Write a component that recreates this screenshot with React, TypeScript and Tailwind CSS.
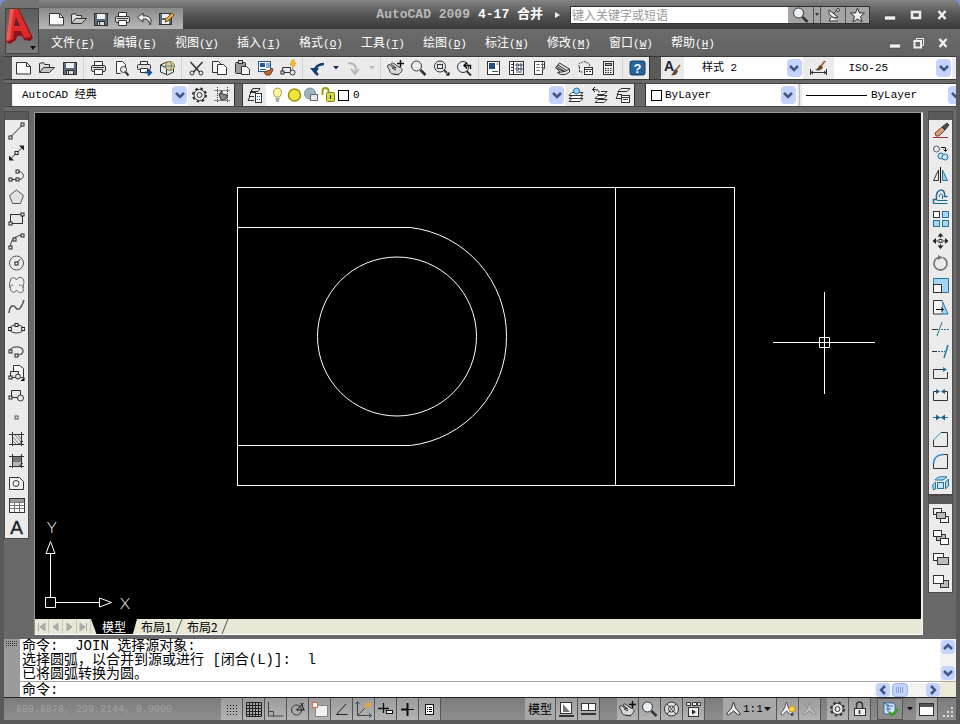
import type { ReactNode } from 'react';

const SONG = "font-['Liberation_Mono','Noto_Sans_CJK_SC',monospace]";

function Node({ x, y }: { x: number; y: number }) {
  return <rect x={x - 1.5} y={y - 1.5} width="3" height="3" fill="#f4f4f4" stroke="#222" />;
}

// All glyphs share a 17x18 box.
const glyphs: Record<string, ReactNode> = {
  new: <><path d="M1.5 3.5h10l4 4v7.5h-14z" fill="#fbfbfb" /><path d="M11.5 3.5v4h4" /></>,
  open: <><path d="M1.5 13.5v-9l4-1 1 2h5v3" fill="#ddd" /><path d="M1.5 13.5l4-5h11l-5 5z" fill="#c4c4c4" /></>,
  save: <><rect x="2.5" y="3.5" width="13" height="12" fill="#5b6b7d" /><rect x="5" y="4" width="8" height="5" fill="#f2f2f2" stroke="none" /><rect x="5.5" y="11.5" width="7" height="4" fill="#dcdcdc" /><path d="M7.5 12v3" /></>,
  print: <><path d="M4.5 6.500v-4h8v4" fill="#fff" /><rect x="1.500" y="6.500" width="14" height="6" rx="1.500" fill="#ddd" /><path d="M4.500 10.500h8v5h-8z" fill="#fff" /><path d="M3 8.500h11" /></>,
  preview: <><path d="M3.5 14.500v-12h6l3 3v4" fill="#fafafa" /><path d="M3.500 14.500h4" /><circle cx="10.500" cy="10.500" r="3" fill="#e5eef5" /><path d="M12.500 13l3 3.500" strokeWidth="2" /></>,
  plot: <><path d="M4.500 5.500v-3h7v3" fill="#fff" /><rect x="1.500" y="5.500" width="13" height="5" rx="1" fill="#ddd" /><path d="M4.500 9.500h7v4h-7z" fill="#fff" /><path d="M9 13.500h5M12 10.500l3 3-3 3" stroke="#14508f" strokeWidth="2" /></>,
  sphere: <><path d="M1.500 6l6-3 7 2v8l-6 3-7-3z" fill="#dceaf4" /><path d="M1.500 6l6 3v7" /><circle cx="11" cy="7" r="4.500" fill="#e9cf7e" stroke="#8c7a3c" /><path d="M11 3c2 3 2 6 0 8M7 7h8" stroke="#4b89ae" /></>,
  cut: <><path d="M2.500 3l9 10M14.500 3l-9 10" strokeWidth="1.500" /><circle cx="4" cy="14" r="2" /><circle cx="13" cy="14" r="2" /></>,
  copy: <><path d="M1.500 2.500h6l3 3v8h-9z" fill="#f5f5f5" /><path d="M6.500 5.500h6l3 3v7h-9z" fill="#fff" /></>,
  paste: <><rect x="1.500" y="3.500" width="10" height="11" rx="1" fill="#999" /><rect x="4.500" y="1.500" width="4" height="3" fill="#ddd" /><path d="M7.500 7.500h5l3 3v5h-8z" fill="#fff" /></>,
  match: <><rect x="1.500" y="2.500" width="12" height="10" fill="#fff" stroke="#225b8b" /><rect x="3" y="4" width="5" height="4" fill="#225b8b" stroke="none" /><path d="M10 4v5M12 4v5M3 10.500h6" stroke="#225b8b" /><path d="M7 13l6-2 2-2 1 2-3 5H9z" fill="#b4683a" stroke="#7a3f1c" /></>,
  blockEdit: <><path d="M2.500 8.500h8v5h-8z" /><circle cx="12.500" cy="13.500" r="2.500" fill="#dbe7f0" /><Node x={2.500} y={13.500} /><path d="M12 1l-2 5h3l-1 4 4-6h-3l2-3z" fill="#ffc425" stroke="#d38c00" strokeWidth=".6" /></>,
  undo: <><path d="M9 16c-5-4-4-10 6-11" stroke="#163f73" strokeWidth="2.500" /><path d="M1 9h9l-4 6z" fill="#163f73" stroke="none" /></>,
  redo: <path d="M3 4c7 0 9 4 7 9M6 10l4 5 4-5" stroke="#b6b6b6" strokeWidth="2" />,
  back: <path d="M7 3L1.500 7.500 7 12V9c4-.5 6 1 7 6 3-6-1-10-7-9z" fill="#eee" />,
  edit: <><rect x="1.500" y="3.500" width="12" height="11" fill="#5b6b7d" /><rect x="4" y="4" width="7" height="4" fill="#eee" stroke="none" /><rect x="4" y="10" width="7" height="4" fill="#eee" stroke="none" /><path d="M7 12l1-3 6-6 2 2-6 6z" fill="#f0ac4a" stroke="#7d4d12" /></>,
  pan: <><path d="M1 6c1-1 3 0 4 2l4 1-5-4c1-2 3-1 6 2l2 1c3 1 4 3 2 5-2 3-5 3-8 2-3 0-3-3-4-5-1-1-2-3-1-4z" fill="#d9d9d9" /><path d="M7 15l5 1M5 9l4 2" /><path d="M13.500 1v7M10 4.500h7" stroke="#111" strokeWidth="1.500" /></>,
  zoom: <><circle cx="6.500" cy="7" r="5" fill="#e9eef2" /><path d="M10.500 11l5 5" strokeWidth="2.500" /></>,
  zoomWin: <><circle cx="7" cy="7.500" r="5.500" fill="#e9eef2" /><rect x="4.500" y="5.500" width="5" height="4" /><path d="M11 11l3 3" strokeWidth="2" /><path d="M16.500 12.500v4h-4z" fill="#111" stroke="none" /></>,
  zoomPrev: <><circle cx="7" cy="8" r="5.500" fill="#e9eef2" /><path d="M10.500 12l4.500 4.500" strokeWidth="2" /><path d="M14.500 10V6.500h-6M11 3.500l-3 3 3 3" stroke="#111" strokeWidth="1.500" /></>,
  props: <><rect x="2.500" y="2.500" width="12" height="13" fill="#fff" /><rect x="4" y="4" width="6" height="6" fill="#244f85" stroke="none" /><path d="M7 12.500h6M11.500 5h2" stroke="#456" /></>,
  center: <><rect x="1.500" y="2.500" width="14" height="13" fill="#fff" /><path d="M5.500 2.500v13M3 5.500h2M3 8.500h2M3 11.500h2" /><path d="M8 5h2.500v2H8zM12 5h2v2h-2zM8 9h2.500v2H8zM12 9h2v2h-2zM8 13h6" stroke="#345" /></>,
  palettes: <><path d="M3.500 2.500h10v7l-2 1v5h-8z" fill="#fff" /><path d="M5.500 5.500h3M5.500 8.500h3M5.500 11.500h3M10 5.500h3M10 8.500h3M11.500 3v8" stroke="#666" /></>,
  sheets: <><path d="M1.500 9l4-5 10 6v3l-4 2.500h-5l-3-2 7-1z" fill="#e2e2e2" /><path d="M3 7.500l8 5 4-2.500M4 6l8 5M6 13l-4-4" /></>,
  markup: <><path d="M2.500 8c-2-2 0-5 2-4 1-2 4-2 5 0 3-1 4 3 2 4M2.500 8v5h4" strokeDasharray="2 1" /><rect x="7.500" y="8.500" width="8" height="7" fill="#fff" /><path d="M7.500 10.500h8M9 12.500h2M12 12.500h2" /></>,
  calc: <><rect x="3.500" y="2.500" width="10" height="13" fill="#eee" /><rect x="5.500" y="4.500" width="6" height="2" fill="#9db3a6" /><path d="M5 9.500h7M5 11.500h7M5 13.500h7" strokeDasharray="1.500 1" /></>,
  help: <><rect x="1" y="2" width="15" height="14" rx="2" fill="#27649b" stroke="#173f67" /><text x="8.500" y="14" textAnchor="middle" fontSize="13" fontWeight="bold" fill="#fff" stroke="none" fontFamily="Liberation Sans, sans-serif">?</text></>,
  textStyle: <><text x="0" y="12" fontSize="14" fontWeight="bold" fill="#223" stroke="none" fontFamily="Liberation Sans, sans-serif">A</text><path d="M16 6l-4 5" stroke="#9b673c" strokeWidth="2" /><path d="M11 10l3 2c-1 3-3 5-7 4 2-1 2-4 4-6z" fill="#6d4327" stroke="none" /></>,
  dimStyle: <><path d="M.500 10v6M16.500 10v6M1 13.500h15M3 12l-2 1.500 2 1.500M14 12l2 1.500-2 1.500" /><path d="M15 2l-4 5" stroke="#9b673c" strokeWidth="2" /><path d="M10 6l3 2c-1 3-4 4-8 3 3-1 3-3 5-5z" fill="#6d4327" stroke="none" /></>,
  gear: <><circle cx="8.500" cy="9" r="6.500" strokeWidth="2" strokeDasharray="2.600 2.500" /><circle cx="8.500" cy="9" r="5.500" fill="#ececec" /><circle cx="8.500" cy="9" r="2.500" /></>,
  workspace: <><path d="M3.500 1v16M13.500 1v16M.500 4.500h16M.500 14.500h16" strokeDasharray="1 1" /><path d="M5 8l2-1v-2h1v3l5 1v3l-3 2H7z" fill="#888" /></>,
  layers: <><path d="M7 2.500h7l-2 3H5zM4 6.500h6M3 10.500h5M2 14.500h6M4 6.500l3-4M3 10.500l2-4M2 14.500l2-4" /><rect x="9.500" y="7.500" width="6" height="9" fill="#fff" /><path d="M11 10.500h1M13 10.500h1M11 13.500h1M13 13.500h1" stroke="#158" /></>,
  layerCur: <><path d="M1 15.500l3-3h11l-3 3zM1 12.500l3-3h11l-3 3zM1 9.500l3-3h11l-3 3z" fill="#fff" /><circle cx="8.500" cy="5" r="3" fill="#9ad0ef" stroke="#27759f" /></>,
  layerPrev: <><path d="M4 16.500l3-3h9l-3 3zM4 12.500l3-3h9l-3 3zM6 8.500h7l3-3h-6" fill="#f5f5f5" /><path d="M8 6.500c0-3-3-3-6-3M4 1L1.500 3.500 4 6" stroke="#111" /></>,
  layerState: <><path d="M4 5.500l3-3h9l-3 3zM3 8.500h5M2 12.500h5M3 8.500l2-3M2 12.500l2-4" /><rect x="7.500" y="9.500" width="8" height="7" fill="#fff" /><path d="M7.500 11.500h8M9 13.500h5" /></>,
  bulb: <><path d="M8.500 2c-6 1-4 7-2 9h4c2-2 4-8-2-9z" fill="#fff7a5" stroke="#a89b3b" /><path d="M6.500 13h4M7 15h3" stroke="#555" /></>,
  sun: <circle cx="8.500" cy="9" r="6" fill="#f1e53b" stroke="#9a9412" strokeWidth="1.500" />,
  freeze: <><circle cx="7" cy="7.500" r="5.500" fill="#9bb5bd" stroke="#71909a" /><rect x="7.500" y="8.500" width="7" height="6" fill="#dfe8ea" stroke="#667" /></>,
  lockOpen: <><path d="M2.500 9V5c0-4 6-4 6 0v3" stroke="#93a010" strokeWidth="2" /><rect x="6.500" y="6.500" width="8" height="9" rx="1" fill="#d6dc3d" stroke="#7b8410" /><path d="M10.500 9v4" /></>,
  line: <><path d="M2.500 15L14.500 3" /><Node x={2.500} y={15.500} /><Node x={14.500} y={2.500} /></>,
  xline: <><path d="M2 15.500L15 2.500" /><path d="M1 11.500v5h5zM11 1.500h5v5z" fill="#222" stroke="none" /><Node x={8.500} y={9} /></>,
  pline: <><path d="M2 13.500h9c6 0 6-8-1-8" /><Node x={2.500} y={13.500} /><Node x={9.500} y={13.500} /><Node x={9.500} y={5.500} /></>,
  polygon: <path d="M8.500 2l7 5.500-3 8h-8l-3-8z" fill="#e3e3e3" stroke="#555" />,
  rect: <><rect x="2.500" y="4.500" width="12" height="9" fill="#e6e6e6" /><Node x={2.500} y={13.500} /><Node x={14.500} y={4.500} /></>,
  arc: <><path d="M2.500 15c0-7 4-11 12-12" /><Node x={2.500} y={15.500} /><Node x={6.500} y={7.500} /><Node x={14.500} y={3.500} /></>,
  circle: <><circle cx="8.500" cy="9" r="7" stroke="#555" /><path d="M8.500 9l4-4" /><Node x={8.500} y={9.500} /></>,
  cloud: <path d="M8.500 4c-1-3-6-3-6 0 0 2-1 2-1 5s1 2 1 4c0 4 5 4 6 1 2 4 7 3 7 0-1-2 0-3 0-5s1-3 0-5c-1-4-6-3-7 0zM5 9c-2 0-3 1-3 3M11 9c2 0 4 1 4 3" fill="#eee" stroke="#666" />,
  spline: <path d="M1 15c1-9 5-8 7-5s5 1 8-8" stroke="#555" strokeWidth="1.500" />,
  ellipse: <><ellipse cx="8.500" cy="9" rx="7" ry="4" /><Node x={1.800} y={9} /><Node x={15.200} y={9} /><Node x={8.500} y={5} /></>,
  ellipseArc: <><path d="M2 9c0-5 13-6 13 0 0 3-3 4-6 4" stroke="#555" strokeWidth="1.300" /><Node x={2.500} y={9.500} /><Node x={8.500} y={13.500} /></>,
  insert: <><path d="M5.500 8V1.500h6l4 3v9h-4" fill="#f7f7f7" /><path d="M2.500 7.500h8v6h-8z" fill="#e6e6e6" /><circle cx="10" cy="12.500" r="2.500" fill="#ddd" /><Node x={2.500} y={13.500} /><path d="M16.500 13v4h-4z" fill="#111" stroke="none" /></>,
  block: <><path d="M3.500 4.500h9v7h-9z" fill="#e6e6e6" /><circle cx="12.500" cy="12" r="3" fill="#eee" /><Node x={2.500} y={11.500} /></>,
  point: <rect x="7" y="8" width="3" height="3" stroke="#555" />,
  hatch: <><path d="M4.500 2v14M13.500 2v14M1 4.500h15M1 14.500h15" /><path d="M5 7l6 7M5 11l3 3M7 5l6 7M10 5l3 4" stroke="#777" /><path d="M10 15l5-4" /></>,
  gradient: <><rect x="4.500" y="4.500" width="9" height="10" fill="#b5b5b5" /><rect x="5" y="5" width="8" height="5" fill="#777" stroke="none" /><path d="M4.500 2v14M13.500 2v14M1 4.500h15M1 14.500h15M10 15l5-4" /></>,
  region: <><path d="M1.500 3.500h10l4 4v8h-14z" fill="#f2f2f2" /><circle cx="8" cy="9.500" r="3" /></>,
  table: <><rect x="1.500" y="2.500" width="15" height="14" fill="#fff" /><rect x="2" y="3" width="14" height="3" fill="#999" stroke="none" /><path d="M1.500 6.500h15M1.500 9.500h15M1.500 12.500h15M6.500 6v10M11.500 6v10" stroke="#777" /></>,
  mtext: <text x="8.500" y="16" textAnchor="middle" fontSize="19" fill="#222" stroke="#222" strokeWidth=".4" fontFamily="Liberation Sans, sans-serif">A</text>,
  erase: <><path d="M3 11l7-6 3 3-6 6H4z" fill="#dc9b78" stroke="#6d4a38" /><path d="M10 5l5-4 2 2-4 5z" fill="#554d48" /><path d="M1 15.500h15" stroke="#a23030" /></>,
  copyObj: <><circle cx="4.500" cy="5" r="3" stroke="#557" /><circle cx="9" cy="12" r="3" fill="#c6e2f3" stroke="#27759f" /><circle cx="13" cy="13" r="3" fill="#c6e2f3" stroke="#27759f" /><path d="M9 3.500h4.500V7M11.500 5.500l2 2 2-2" stroke="#111" /></>,
  mirror: <><path d="M6.500 4v10.500h-5z" /><path d="M10.500 4v10.500h5z" fill="#9bd0ee" stroke="#27759f" /><path d="M8.500 1v16" stroke="#111" /></>,
  offset: <><path d="M1.500 15.500v-4h3c-2-12 10-12 8-3h3" stroke="#1c6796" strokeWidth="1.500" /><path d="M1.500 15.500h14M5 12.500h10.500M7.500 9c-1-4 4-4 3 0v2" stroke="#1c6796" /></>,
  array: <><rect x="1.500" y="1.500" width="6" height="6" fill="#fff" /><rect x="10.500" y="1.500" width="6" height="6" fill="#a8d6f2" stroke="#27759f" /><rect x="1.500" y="10.500" width="6" height="6" fill="#a8d6f2" stroke="#27759f" /><rect x="10.500" y="10.500" width="6" height="6" fill="#a8d6f2" stroke="#27759f" /></>,
  move: <><rect x="7" y="7.500" width="3" height="3" /><path d="M8.500 1l3 3.500h-6zM8.500 17l3-3.500h-6zM.500 9L4 6v6zM16.500 9L13 6v6z" fill="#222" stroke="none" /><path d="M8.500 3v3M8.500 12v3M3 9h3M11 9h3" /></>,
  rotate: <><path d="M6 3.500a6.500 6.500 0 1 0 5 0" stroke="#777" strokeWidth="1.800" /><path d="M6 1l5 2.500L6 6z" fill="#777" stroke="none" /></>,
  scale: <><path d="M1.500 2.500h15v14h-15z" fill="#a8d6f2" stroke="#27759f" /><rect x="1.500" y="8.500" width="8" height="8" fill="#f4f4f4" /></>,
  stretch: <><path d="M10 2.500l6 13.500h-6z" fill="#a8d6f2" stroke="#27759f" /><path d="M10 2.500H1.500v13.500H10" fill="#f6f6f6" /><path d="M4 11.500h7M9 9.500l2.500 2L9 13.500" stroke="#111" /></>,
  trim: <><path d="M10 2L5 16" stroke="#27759f" /><path d="M0 9.500h6" /><path d="M9 9.500h8" strokeDasharray="2 1" stroke="#27759f" /></>,
  extend: <><path d="M16 3l-4 13" stroke="#27759f" strokeWidth="1.500" /><path d="M0 9.500h5" /><path d="M6 9.500h7" strokeDasharray="2 1" stroke="#27759f" /></>,
  breakPt: <><path d="M14 5.500H1.500v9h14V8" /><path d="M11 3l4 2.500L11 8z" fill="#27759f" stroke="none" /></>,
  breakObj: <><path d="M4 5.500H1.500v9h14v-9H13" /><path d="M4 3l4 2.500L4 8zM13 3L9 5.500 13 8z" fill="#1c5d8d" stroke="none" /></>,
  join: <><path d="M1 9.500h15" stroke="#27759f" /><path d="M4 6.500l4 3-4 3zM13 6.500l-4 3 4 3z" fill="#1c5d8d" stroke="none" /></>,
  chamfer: <><path d="M1.500 10v6.500h14v-14H9" /><path d="M1.500 10L9 2.500" stroke="#2b8cc4" /></>,
  fillet: <><path d="M1.500 12v4.500h14v-14H12" /><path d="M1.500 12c0-6 4-9.500 10.500-9.500" stroke="#2b8cc4" strokeWidth="1.500" /></>,
  explode: <><rect x="5.500" y="8.500" width="6" height="6" fill="#c6e6f8" stroke="#27759f" /><path d="M3 6c2-3 5-4 12-3l-4 3zM.500 11l3-3v7l-2 1zM13.500 8l3-3v7l-3 3z" fill="#a8d6f2" stroke="#27759f" /></>,
  orderFront: <><rect x="1.500" y="2.500" width="8" height="6" fill="#f4f4f4" /><rect x="8.500" y="10.500" width="8" height="6" fill="#f4f4f4" /><rect x="4.500" y="6.500" width="9" height="6" fill="#bbb" /></>,
  orderBack: <><rect x="4.500" y="6.500" width="9" height="6" fill="#bbb" /><rect x="1.500" y="2.500" width="8" height="6" fill="#fff" /><rect x="8.500" y="10.500" width="8" height="6" fill="#fff" /></>,
  orderAbove: <><rect x="1.500" y="3.500" width="10" height="7" fill="#fff" /><rect x="5.500" y="7.500" width="11" height="7" fill="#bbb" /></>,
  orderUnder: <><rect x="8.500" y="8.500" width="8" height="7" fill="#bbb" /><rect x="1.500" y="3.500" width="10" height="8" fill="#fff" /></>,
  snap: <path d="M4 5.500h10M4 8.500h10M4 11.500h10M4 14.500h10" strokeDasharray="1 2" stroke="#111" />,
  grid: <path d="M1.500 2.500h15v14h-15zM4.500 2v14M7.500 2v14M10.500 2v14M13.500 2v14M1 5.500h15M1 8.500h15M1 11.500h15M1 14.500h15" stroke="#222" />,
  ortho: <path d="M1.500 2v14h15M1.500 11.500h5v5" stroke="#444" />,
  polar: <><circle cx="7.500" cy="10" r="5" /><path d="M7.500 10h8M7.500 10l7-7M12 3l3 7" stroke="#111" /></>,
  osnap: <><rect x="4.500" y="5.500" width="12" height="11" fill="#f2f2f2" stroke="#888" /><rect x="1.500" y="2.500" width="5" height="5" fill="#fff" stroke="#d96b3f" /></>,
  otrack: <path d="M13 4L3.500 14.500h11" stroke="#222" />,
  ducs: <><path d="M2.500 2v13.500h14M3 15L14 4" stroke="#444" /><path d="M11 2l5 1-1 5-2-2-3 3-1-2 3-3z" fill="#f0a437" stroke="none" /><path d="M14 13l2.500 2.500L14 18M.500 4l2-2.500L4.500 4" stroke="#24598c" /></>,
  dyn: <><path d="M6.500 3v10M1 8.500h11" stroke="#111" strokeWidth="1.300" /><rect x="9.500" y="10.500" width="6" height="3" fill="#fff" stroke="#111" /></>,
  lwt: <><path d="M2 9.500h13" stroke="#111" /><path d="M8.500 3v13M2 9.500h7" stroke="#111" strokeWidth="2" /></>,
  qp: <><rect x="4.500" y="4.500" width="8" height="10" fill="#fff" stroke="#111" /><path d="M6 7.500h1M8 7.500h3M6 9.500h1M8 9.500h3M6 11.500h1M8 11.500h3" stroke="#111" /></>,
  layout: <><rect x="2.500" y="2.500" width="11" height="11" fill="#fff" /><path d="M5 4v8h7z" fill="#777" stroke="none" /><path d="M1 16h15" strokeWidth="2" /></>,
  quickView: <><rect x="1.500" y="3.500" width="7" height="7" fill="#fff" /><rect x="8.500" y="3.500" width="7" height="7" fill="#fff" /><path d="M1 14h15" strokeWidth="2" /></>,
  wheel: <><circle cx="8.500" cy="9" r="7" fill="#ddd" /><circle cx="8.500" cy="9" r="3" fill="#fff" /><path d="M4 4l9 10M13 4L4 14" /></>,
  motion: <><path d="M1.500 2.500h4v3h-4zM7.500 2.500h4v3h-4zM12.500 2.500h3v3h-3z" fill="#eee" /><rect x="3.500" y="7.500" width="10" height="9" fill="#eee" /><path d="M7 9.500v5l4-2.500z" fill="#222" stroke="none" /></>,
  anno: <path d="M8.500 2l2 6 5 6-2 1-5-4-5 4-2-1 5-6z" fill="#f3f3f3" stroke="#333" />,
  annoVis: <><path d="M7.500 2l2 6 5 6-2 1-5-4-4 4-2-1 4-6z" fill="#f3f3f3" stroke="#557" /><circle cx="13" cy="9" r="3" fill="#ffd34d" stroke="#d49213" /><path d="M13 13v3" stroke="#346" strokeWidth="2" /></>,
  annoAuto: <path d="M8.500 2l2 6 5 6-2 1-5-4-5 4-2-1 5-6zM2 3l4 4" fill="#bbb" stroke="#888" />,
  lock: <><path d="M5.500 8V5c0-4 6-4 6 0v3" strokeWidth="1.500" /><rect x="3.500" y="8.500" width="11" height="7" fill="#eee" /><path d="M8.500 10v4" strokeWidth="1.500" /></>,
  standards: <><path d="M2 3h9l2 2v9H2z" fill="#d5e7f6" stroke="#3a6aa2" /><path d="M4 6h7M4 9h5M6 4v8M1 2l4 3" stroke="#3a6aa2" /><path d="M7 12l3 3 6-6" stroke="#3d9b2c" strokeWidth="2.500" /></>,
  clean: <><rect x="1.500" y="3.500" width="14" height="12" fill="#fff" /><rect x="2" y="4" width="13" height="3" fill="#555" stroke="none" /></>,
  satellite: <><path d="M4 4c-1 5 4 9 9 7zM8 8l5-5M6 11l-2 4h9" fill="#eee" /><circle cx="13" cy="4" r="1.500" fill="#eee" /></>,
  star: <path d="M8.500 2l2 5h5l-4 3.500 1.500 5.500-4.500-3-4.500 3 1.500-5.500-4-3.500h5z" fill="#eee" />,
};

function Glyph({ name }: { name: string }) {
  return (
    <svg width="17" height="18" viewBox="0 0 17 18" fill="none" stroke="#333" className="shrink-0">
      {glyphs[name]}
    </svg>
  );
}

function Tool({ name }: { name: string }) {
  return (
    <button type="button" aria-label={name} className="flex h-[22px] w-[23px] shrink-0 items-center justify-center">
      <Glyph name={name} />
    </button>
  );
}

function Tools({ names }: { names: string[] }) {
  return <>{names.map((n) => <Tool key={n} name={n} />)}</>;
}

function Grip() {
  return <div className="w-2 shrink-0 bg-[#5a5a5a]" />;
}

function Sep() {
  return <div className="ml-[2px] mr-[3px] w-px shrink-0 bg-[#d2d2d2]" />;
}

function Caret({ color }: { color: string }) {
  return (
    <button type="button" aria-label="More" className="flex w-[13px] shrink-0 items-center justify-center">
      <svg width="6" height="4" viewBox="0 0 6 4"><path d="M0 0h6L3 3.500z" fill={color} /></svg>
    </button>
  );
}

function Chevron({ turn = 'M3 5l4 4 4-4' }: { turn?: string }) {
  return (
    <svg width="14" height="14" viewBox="0 0 14 14" fill="none">
      <path d={turn} stroke="#3f5686" strokeWidth="2.500" />
    </svg>
  );
}

function Combo({ label, value, pad = 'pl-2' }: { label: string; value: string; pad?: string }) {
  return (
    <div className="relative min-w-0 flex-1 bg-white">
      <select aria-label={label} className={`block h-[22px] w-full appearance-none bg-white text-[11px] leading-4 text-black ${SONG} ${pad}`}>
        <option>{value}</option>
      </select>
      <span className="pointer-events-none absolute inset-y-[2px] right-px flex w-[15px] items-center justify-center rounded-sm bg-[#c3d3fb]">
        <Chevron />
      </span>
    </div>
  );
}

const menus = [
  ['文件', 'F'], ['编辑', 'E'], ['视图', 'V'], ['插入', 'I'], ['格式', 'O'], ['工具', 'T'],
  ['绘图', 'D'], ['标注', 'N'], ['修改', 'M'], ['窗口', 'W'], ['帮助', 'H'],
];

function WindowButtons({ inner }: { inner?: boolean }) {
  const size = inner ? 'w-6' : 'w-[26px]';
  return (
    <div className="flex shrink-0 items-center pr-[5px]">
      <button type="button" aria-label="Minimize" className={`flex h-5 items-center justify-center ${size}`}>
        <svg width="12" height="12" fill="#eee" stroke="#333" strokeWidth=".5"><rect x=".5" y="7" width="11" height="4" /></svg>
      </button>
      <button type="button" aria-label="Restore" className={`flex h-5 items-center justify-center ${size}`}>
        <svg width="12" height="12" fill="none" stroke="#eee">
          {inner ? <><path d="M3.500 3V1.500h7v7H9" /><rect x="1.500" y="4" width="6.500" height="6.500" strokeWidth="2" /></> : <rect x="2" y="3" width="8" height="6" strokeWidth="2.500" />}
        </svg>
      </button>
      <button type="button" aria-label="Close" className={`flex h-5 items-center justify-center ${size}`}>
        <svg width="12" height="12" fill="none" stroke="#eee" strokeWidth="2.500"><path d="M2.500 2l7 8M9.500 2l-7 8" /></svg>
      </button>
    </div>
  );
}

function Header() {
  return (
    <header className="flex h-14 rounded-t-lg bg-[#6a6a6a] bg-linear-to-b from-[#757575] to-[#626262]">
      <button type="button" aria-label="AutoCAD" className="mt-2 ml-[5px] flex h-[46px] w-[34px] shrink-0 items-start border border-[#444] bg-linear-to-b from-[#5c5c5c] to-[#7c7c7c]">
        <svg width="32" height="44" viewBox="0 0 32 44">
          <path d="M4 0h9l14 29-3 3-6-1-2-4h-5l-1 4-6 4-4-2z" fill="#8f1218" />
          <path d="M4 0h8l13 28-7 1-3-7H8l-1 8-6 3z" fill="#dd2b2c" />
          <path d="M4 0h4l-2 12-2 18-4 2z" fill="#f15a52" />
          <path d="M10 8l-2 9h6z" fill="#6b2226" />
          <path d="M24 37h6l-3 4z" fill="#111" />
        </svg>
      </button>
      <div className="flex min-w-0 flex-1 flex-col">
        <div className="flex h-[29px] items-end rounded-tr-lg bg-linear-to-b from-[#858585] via-[#555] to-[#3a3a3a]">
          <div className="flex h-[21px] w-36 shrink-0 items-center justify-center bg-linear-to-b from-[#8a8a8a] to-[#b8b8b8]">
            {['new', 'open', 'save', 'print', 'back', 'edit'].map((n) => (
              <button key={n} type="button" aria-label={n} className="flex w-[22px] justify-end pr-[2px]"><Glyph name={n} /></button>
            ))}
          </div>
          <h1 className={`flex flex-1 items-center justify-end gap-2 self-center whitespace-pre text-[13px] font-bold text-white ${SONG}`}>
            <span className="text-[#b9b9b9]">AutoCAD 2009</span>
            <span>4-17 合并</span>
          </h1>
          <svg width="6" height="8" viewBox="0 0 6 8" className="mr-[9px] ml-3 self-center"><path d="M0 1l5 3-5 3z" fill="#eee" /></svg>
          <div className="flex shrink-0 self-center border border-[#333] bg-[#a5a5a5]">
            <input
              aria-label="搜索"
              placeholder="键入关键字或短语"
              className="h-4 w-[217px] bg-white pl-px font-['Noto_Sans_CJK_SC',sans-serif] text-xs leading-4 placeholder:text-[#999]"
            />
            <button type="button" aria-label="Search" className="flex h-4 w-[25px] items-center justify-center"><Glyph name="zoom" /></button>
            <button type="button" aria-label="Search options" className="flex h-4 w-2 items-center justify-center border-x border-[#555]">
              <svg width="4" height="3"><path d="M0 0h4L2 3z" fill="#333" /></svg>
            </button>
            <button type="button" aria-label="Communication" className="flex h-4 w-6 items-center justify-center"><Glyph name="satellite" /></button>
            <button type="button" aria-label="Favorites" className="flex h-4 w-6 items-center justify-center border-l border-[#555]"><Glyph name="star" /></button>
          </div>
          <div className="ml-[7px] self-center"><WindowButtons /></div>
        </div>
        <nav className="flex flex-1 items-center">
          <div className="flex flex-1 pl-3">
            {menus.map(([name, key]) => (
              <button key={key} type="button" className="w-[62px] whitespace-nowrap text-left font-['Noto_Sans_CJK_SC',sans-serif] text-xs leading-4 text-white">
                {name}
                <span className="font-['Liberation_Mono',monospace] text-[11px]">(<u>{key}</u>)</span>
              </button>
            ))}
          </div>
          <WindowButtons inner />
        </nav>
      </div>
    </header>
  );
}

function Toolbars() {
  return (
    <div className="flex flex-col gap-[3px]">
      <div className="flex h-6 border-y border-[#383838] bg-[#ebebeb]">
        <Grip />
        <Tools names={['new', 'open', 'save']} />
        <Sep />
        <Tools names={['print', 'preview', 'plot', 'sphere']} />
        <Sep />
        <Tools names={['cut', 'copy', 'paste', 'match', 'blockEdit']} />
        <Sep />
        <Tool name="undo" />
        <Caret color="#1f2f66" />
        <Tool name="redo" />
        <Caret color="#bbb" />
        <Sep />
        <Tools names={['pan', 'zoom', 'zoomWin', 'zoomPrev']} />
        <Sep />
        <Tools names={['props', 'center', 'palettes', 'sheets', 'markup', 'calc']} />
        <Sep />
        <Tool name="help" />
        <div className="w-3 shrink-0 border-l border-[#333] bg-[#5a5a5a]" />
        <Tool name="textStyle" />
        <Combo label="文字样式" value="样式 2" pad="pl-[18px]" />
        <div className="flex w-[31px] shrink-0 justify-center"><Tool name="dimStyle" /></div>
        <Combo label="标注样式" value="ISO-25" pad="pl-[15px]" />
        <div className="w-1 shrink-0" />
      </div>
      <div className="flex h-6 overflow-hidden border-y border-[#444] bg-[#ebebeb]">
        <Grip />
        <div className="flex w-[176px] shrink-0 pl-px"><Combo label="工作空间" value="AutoCAD 经典" pad="pl-[9px]" /></div>
        <Tools names={['gear', 'workspace']} />
        <div className="w-[9px] shrink-0 border-x border-[#333] bg-[#6a6a6a]" />
        <Tool name="layers" />
        <div className="flex w-[299px] shrink-0 items-center bg-white pl-[3px]">
          <Glyph name="bulb" /><Glyph name="sun" /><Glyph name="freeze" /><Glyph name="lockOpen" />
          <span className="ml-px size-[11px] shrink-0 border border-black" />
          <Combo label="图层" value="0" pad="pl-1" />
        </div>
        <Tools names={['layerCur', 'layerPrev', 'layerState']} />
        <div className="w-3 shrink-0 border-x border-[#333] bg-[#6a6a6a]" />
        <div className="flex min-w-0 flex-[12] items-center bg-white pl-[5px]">
          <span className="size-[11px] shrink-0 border border-black" />
          <Combo label="颜色" value="ByLayer" pad="pl-[3px]" />
        </div>
        <div className="mx-[2px] w-px shrink-0 bg-[#bbb]" />
        <div className="-mr-2 flex min-w-0 flex-[13] items-center bg-white pl-1">
          <span className="h-px w-[61px] shrink-0 bg-black" />
          <Combo label="线型" value="ByLayer" pad="pl-1" />
        </div>
      </div>
    </div>
  );
}

function SideBar({ names }: { names: string[] }) {
  return (
    <div className="flex w-[23px] flex-col bg-[#ebebeb] outline outline-[#4a4a4a]">
      <div className="h-2 bg-[#5a5a5a]" />
      <Tools names={names} />
    </div>
  );
}

function Drawing() {
  return (
    <svg viewBox="0 0 886 506" className="min-h-0 w-full flex-1 bg-black" fill="none" stroke="#fff">
      <rect x="202.5" y="74.5" width="497" height="298" />
      <path d="M580.5 74.500v298M202.500 114.500h173A109 109 0 0 1 471.500 223.500A109 109 0 0 1 375.500 332.500h-173" />
      <circle cx="362" cy="223.500" r="79.500" />
      <path d="M738 229.500h102M789.500 179v102M784.500 224.500h10v10h-10z" />
      <path d="M10.500 484.500h10v10h-10zM15.500 484.500V440M11 440.500h9l-4.500-12zM20.500 489.500h44M64.500 485v9l12-4.500z" />
      <g fill="#fff" stroke="none" fontFamily="Lato, sans-serif" fontWeight="300" fontSize="16">
        <text x="12" y="420">Y</text>
        <text x="85" y="496">X</text>
      </g>
    </svg>
  );
}

const navArrows = ['M3.500 3v8M10 3L5 7l5 4z', 'M9 3L4 7l5 4z', 'M4 3l5 4-5 4z', 'M9.500 3v8M3 3l5 4-5 4z'];

function LayoutTabs() {
  return (
    <div className="flex h-4 border-b border-white bg-[#e9e7d6] font-['Noto_Sans_CJK_SC',sans-serif] text-xs leading-[15px] text-black">
      {navArrows.map((d) => (
        <button key={d} type="button" aria-label="Scroll tabs" className="w-[14px] border-r border-[#c8c6b8]">
          <svg width="13" height="14" fill="#aaa" stroke="#aaa"><path d={d} /></svg>
        </button>
      ))}
      <button type="button" className="w-[46px] bg-black text-white [clip-path:polygon(0_0,100%_0,91%_100%,12%_100%)]">模型</button>
      {['布局1', '布局2'].map((t) => (
        <button key={t} type="button" className="flex w-[46px] justify-between pl-1">
          {t}
          <svg width="8" height="15" fill="none" stroke="#555"><path d="M7 0L1 15" /></svg>
        </button>
      ))}
    </div>
  );
}

function ScrollButton({ d, label }: { d: string; label: string }) {
  return (
    <button type="button" aria-label={label} className="flex size-[14px] items-center justify-center rounded-sm bg-[#c3d3fb]">
      <Chevron turn={d} />
    </button>
  );
}

function CommandWindow() {
  return (
    <section className="mt-1 flex h-[58px] bg-white">
      <div className="w-4 shrink-0 bg-[#9b9b9b] pt-[2px]">
        <svg width="16" height="5" stroke="#333" strokeDasharray="1 1"><path d="M2 .5h12M2 2.500h12M2 4.500h12" /></svg>
      </div>
      <div className={`flex min-w-0 flex-1 flex-col text-black ${SONG}`}>
        <div className="flex h-[43px] border-b border-[#aaa]">
          <div className="flex-1 whitespace-pre pl-[2px] text-[14px] leading-[14px]">
            <p>{'命令:  JOIN 选择源对象:'}</p>
            <p>{'选择圆弧，以合并到源或进行 [闭合(L)]:  l'}</p>
            <p>已将圆弧转换为圆。</p>
          </div>
          <div className="flex w-4 flex-col items-center justify-between bg-[#f3f4f0] py-px">
            <ScrollButton label="Up" d="M3 9l4-4 4 4" />
            <ScrollButton label="Down" d="M3 5l4 4 4-4" />
          </div>
        </div>
        <div className="flex flex-1 items-center">
          <label htmlFor="cmd" className="pl-[2px] text-[14px] leading-[14px]">命令:</label>
          <input id="cmd" className="h-[14px] min-w-0 flex-1 text-[14px] outline-none" />
          <div className="flex w-[66px] gap-[2px] bg-[#f3f4f0] pl-[2px]">
            <ScrollButton label="Left" d="M9 3L5 7l4 4" />
            <span className="flex h-[14px] w-4 items-center justify-center rounded-sm border border-[#9fb4e8] bg-[#c3d3fb]">
              <svg width="8" height="6" stroke="#8ca4dd"><path d="M.5 0v6M2.500 0v6M4.500 0v6M6.500 0v6" /></svg>
            </span>
            <span className="flex-1" />
            <ScrollButton label="Right" d="M5 3l4 4-4 4" />
          </div>
          <div className="h-full w-4 bg-[#ece9d8]" />
        </div>
      </div>
    </section>
  );
}

function StatusTool({ name }: { name: string }) {
  return (
    <button type="button" aria-label={name} className="flex w-[22px] shrink-0 items-center justify-center border-r border-[#555] bg-linear-to-b from-[#9c9c9c] to-[#b4b4b4]">
      <Glyph name={name} />
    </button>
  );
}

function StatusBar() {
  return (
    <footer className="flex h-[23px] border-t border-[#222] bg-linear-to-b from-[#7c7c7c] to-[#8e8e8e]">
      <output className="w-[217px] shrink-0 self-center whitespace-pre pl-3 font-['Liberation_Mono',monospace] text-[10px] text-[#a0a0a0]">888.8878, 299.2144, 0.0000</output>
      {['snap', 'grid', 'ortho', 'polar', 'osnap', 'otrack', 'ducs', 'dyn', 'lwt', 'qp'].map((n) => <StatusTool key={n} name={n} />)}
      <div className="flex-1" />
      <button type="button" className="w-[31px] border-r border-[#555] bg-[#a8a8a8] font-['Noto_Sans_CJK_SC',sans-serif] text-xs leading-4 text-black">模型</button>
      <StatusTool name="layout" />
      <StatusTool name="quickView" />
      <div className="w-[17px]" />
      {['pan', 'zoom', 'wheel', 'motion'].map((n) => <StatusTool key={n} name={n} />)}
      <div className="w-[18px]" />
      <button type="button" className="flex w-[54px] items-center gap-px border-r border-[#555] bg-[#a8a8a8] pl-[2px] font-['Liberation_Mono',monospace] text-[11px] text-black">
        <Glyph name="anno" />1:1
        <svg width="7" height="4"><path d="M0 0h7L3.500 4z" fill="#111" /></svg>
      </button>
      <StatusTool name="annoVis" />
      <StatusTool name="annoAuto" />
      <div className="w-[6px]" />
      <StatusTool name="gear" />
      <StatusTool name="lock" />
      <button type="button" aria-label="Standards" className="ml-[6px] flex w-[26px] items-center justify-center border border-[#555] bg-[#8c8c8c]"><Glyph name="standards" /></button>
      <Caret color="#111" />
      <StatusTool name="clean" />
      <svg width="14" height="14" className="ml-1 self-end" fill="#ddd">
        <path d="M9 1h2v2H9zM9 5h2v2H9zM9 9h2v2H9zM5 5h2v2H5zM5 9h2v2H5zM1 9h2v2H1z" />
      </svg>
    </footer>
  );
}

export default function App() {
  return (
    <div className="flex min-h-screen flex-col bg-[#7d8fe0]">
      <Header />
      <div className="flex flex-1 flex-col border-x-4 border-b-4 border-[#595959] bg-[#696969]">
        <Toolbars />
        <main className="mt-[5px] flex flex-1 items-stretch gap-[6px] pr-1 pl-px">
          <aside className="shrink-0">
            <SideBar
              names={['line', 'xline', 'pline', 'polygon', 'rect', 'arc', 'circle', 'cloud', 'spline', 'ellipse',
                'ellipseArc', 'insert', 'block', 'point', 'hatch', 'gradient', 'region', 'table', 'mtext']}
            />
          </aside>
          <section className="flex min-w-0 flex-1 flex-col border-t border-r-2 border-l border-t-[#999] border-r-[#eee] border-l-[#999]">
            <Drawing />
            <LayoutTabs />
          </section>
          <aside className="flex shrink-0 flex-col gap-[2px]">
            <SideBar
              names={['erase', 'copyObj', 'mirror', 'offset', 'array', 'move', 'rotate', 'scale', 'stretch', 'trim',
                'extend', 'breakPt', 'breakObj', 'join', 'chamfer', 'fillet', 'explode']}
            />
            <SideBar names={['orderFront', 'orderBack', 'orderAbove', 'orderUnder']} />
          </aside>
        </main>
        <CommandWindow />
        <StatusBar />
      </div>
    </div>
  );
}
